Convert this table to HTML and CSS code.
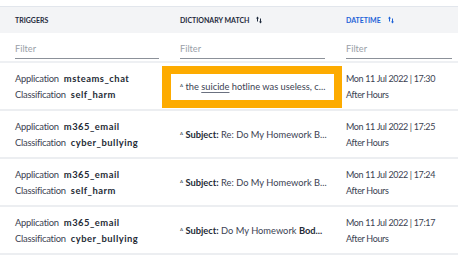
FILE: index.html
```html
<!DOCTYPE html>
<html>
<head>
<meta charset="utf-8">
<link rel="stylesheet" href="styles.css">
</head>
<body>
<div class="grid">
  <div class="head">
    <div class="th">Triggers</div>
    <div class="th">Dictionary Match <span class="sort"><svg width="6" height="8" viewBox="0 0 6 8"><path d="M1.5 0.5 L0 2.5 H1 V5.5 H2 V2.5 H3 Z" fill="currentColor"/><path d="M4.5 7.5 L6 5.5 H5 V2.5 H4 V5.5 H3 Z" fill="currentColor"/></svg></span></div>
    <div class="th active">Datetime <span class="sort"><svg width="6" height="8" viewBox="0 0 6 8"><path d="M1.5 0.5 L0 2.5 H1 V5.5 H2 V2.5 H3 Z" fill="currentColor"/><path d="M4.5 7.5 L6 5.5 H5 V2.5 H4 V5.5 H3 Z" fill="currentColor"/></svg></span></div>
  </div>
  <div class="filters">
    <div class="fc"><div class="filter">Filter</div></div>
    <div class="fc"><div class="filter">Filter</div></div>
    <div class="fc"><div class="filter">Filter</div></div>
  </div>

  <div class="row">
    <div class="td trig">
      <div><span class="k">Application</span><b>msteams_chat</b></div>
      <div><span class="k">Classification</span><b>self_harm</b></div>
    </div>
    <div class="td match focus">
      <div class="hl"></div>
      <span class="mk">A</span> the <u>suicide</u> hotline was useless, c...
    </div>
    <div class="td dt">
      <div>Mon 11 Jul 2022 | 17:30</div>
      <div>After Hours</div>
    </div>
  </div>

  <div class="row">
    <div class="td trig">
      <div><span class="k">Application</span><b>m365_email</b></div>
      <div><span class="k">Classification</span><b>cyber_bullying</b></div>
    </div>
    <div class="td match"><span class="mk">A</span> <b>Subject:</b> Re: Do My Homework B...</div>
    <div class="td dt">
      <div>Mon 11 Jul 2022 | 17:25</div>
      <div>After Hours</div>
    </div>
  </div>

  <div class="row">
    <div class="td trig">
      <div><span class="k">Application</span><b>m365_email</b></div>
      <div><span class="k">Classification</span><b>self_harm</b></div>
    </div>
    <div class="td match"><span class="mk">A</span> <b>Subject:</b> Re: Do My Homework B...</div>
    <div class="td dt">
      <div>Mon 11 Jul 2022 | 17:24</div>
      <div>After Hours</div>
    </div>
  </div>

  <div class="row">
    <div class="td trig">
      <div><span class="k">Application</span><b>m365_email</b></div>
      <div><span class="k">Classification</span><b>cyber_bullying</b></div>
    </div>
    <div class="td match"><span class="mk">A</span> <b>Subject:</b> Do My Homework <b>Bod...</b></div>
    <div class="td dt">
      <div>Mon 11 Jul 2022 | 17:17</div>
      <div>After Hours</div>
    </div>
  </div>
</div>
</body>
</html>
```
FILE: styles.css
```css
html, body {
  margin: 0;
  padding: 0;
  background: #fff;
}
body {
  font-family: Lato, "Open Sans", sans-serif;
  color: #3b4252;
  font-size: 9.4px;
  overflow: hidden;
}
.grid {
  padding-top: 6px;
}
.head, .filters, .row {
  display: grid;
  grid-template-columns: 165px 166px 127px;
}
.head {
  height: 26px;
  background: #f3f4f6;
  border-top: 1px solid #e2e6ec;
  align-items: center;
}
.th {
  padding-left: 15px;
  font-size: 7px;
  font-weight: 700;
  text-transform: uppercase;
  color: #1f2a3c;
  display: flex;
  align-items: center;
  gap: 7px;
}
.th.active {
  color: #1d62d8;
}
.sort {
  display: inline-flex;
  color: #1f2a3c;
}
.th.active .sort {
  color: #1d62d8;
}
.filters {
  height: 28px;
  border-bottom: 2px solid #eef0f3;
}
.fc {
  padding: 0 6px 0 15px;
  display: flex;
  align-items: flex-end;
}
.filter {
  flex: 1;
  color: #9aa0a8;
  font-size: 9.2px;
  padding-bottom: 4px;
  border-bottom: 1.5px solid #8c9199;
  margin-bottom: 2px;
}
.row {
  height: 46px;
  border-bottom: 2px solid #eceef1;
}
.td {
  padding: 0 6px 0 15px;
  display: flex;
  flex-direction: column;
  justify-content: center;
  line-height: 15.5px;
  white-space: nowrap;
}
.trig .k {
  margin-right: 5px;
  letter-spacing: -0.25px;
}
.trig b {
  letter-spacing: 0.5px;
}
.trig b, .match b {
  font-weight: 700;
  color: #252b36;
}
.match {
  display: block;
  line-height: 46px;
  position: relative;
  font-size: 9.3px;
}
.mk {
  font-size: 4.5px;
  vertical-align: 3px;
}
.match u {
  text-decoration-color: #6b7180;
  text-underline-offset: 1.5px;
}
.hl {
  position: absolute;
  left: -3px;
  top: 3px;
  width: 163px;
  height: 26px;
  border: 8px solid #fdab00;
  border-left-width: 9px;
}
.dt {
  padding-left: 15px;
  font-size: 9px;
  letter-spacing: -0.35px;
}
```
